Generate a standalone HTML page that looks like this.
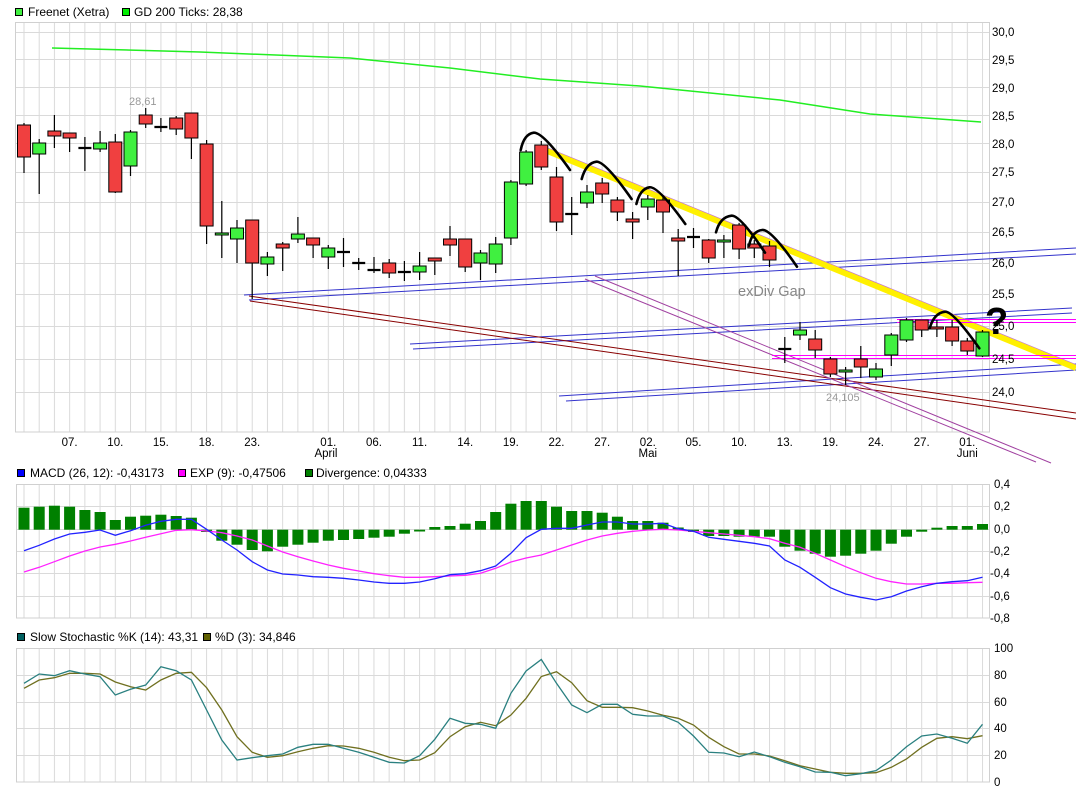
<!DOCTYPE html>
<html><head><meta charset="utf-8"><style>
html,body{margin:0;padding:0;background:#fff;}
svg{display:block;font-family:"Liberation Sans",Arial,sans-serif;}
.ax{font-size:11.5px;fill:#000;}
.lg{font-size:12px;fill:#000;}
</style></head><body>
<svg width="1076" height="810" viewBox="0 0 1076 810" xmlns="http://www.w3.org/2000/svg">
<defs>
<pattern id="vg" x="23.5" y="0" width="15.215" height="810" patternUnits="userSpaceOnUse"><rect x="0" y="0" width="1" height="810" fill="#dadada"/></pattern>
</defs>
<!-- Main panel -->
<rect x="15" y="22" width="975" height="410" fill="#fff"/>
<rect x="15" y="22" width="975" height="410" fill="url(#vg)"/>
<g stroke="#dadada" stroke-width="1">
<path d="M15 32.5H990M15 59.5H990M15 87.5H990M15 115.5H990M15 143.5H990M15 172.5H990M15 202.5H990M15 232.5H990M15 263.5H990M15 294.5H990M15 326.5H990M15 359.5H990M15 392.5H990"/>
</g>
<rect x="15.5" y="22.5" width="974" height="409.5" fill="none" stroke="#d0d0d0"/>

<!-- GD200 -->
<polyline points="52,48 200,52 350,58 450,68 540,79 640,86 780,100 870,114 981,122" fill="none" stroke="#22ee22" stroke-width="1.5"/>

<!-- trendlines -->
<g fill="none" stroke-width="1">
<path d="M244 295L1076 248M249 300L1076 254" stroke="#3333cc"/>
<path d="M410 344L1072 308M413 349L1072 313" stroke="#3333cc"/>
<path d="M559 396L1076 364M566 401L1076 370" stroke="#3333cc"/>
<path d="M249 296L1076 413M250 301L1076 419" stroke="#880000"/>
<path d="M595 276L1051 463M585 279L1036 462" stroke="#a040a0"/>
</g>
<path d="M540 148L1076 368" stroke="#fff000" stroke-width="6"/>
<path d="M540 144.6L1076 364.6" stroke="#c070d0" stroke-width="0.6" fill="none"/>
<path d="M772 355.5H1076M772 358.5H1076M897 319.5H1076M897 322.5H1076" stroke="#ff00ff" stroke-width="1"/>

<!-- wicks -->
<path stroke="#000" stroke-width="1.2" fill="none" d="M24 123V173M39.2 139V194M54.4 115V148M69.6 133V152M84.9 137V171M100.1 131V152M115.3 134V193M130.5 130V176M145.7 108V128M160.9 118V132M176.2 116V135M191.4 113V159M206.6 140V244M221.8 201V258M237 220V263M252.2 220V299M267.4 252V276M282.7 242V271M297.9 217V243M313.1 238V258M328.3 245V269M343.5 238V267M358.7 258V270M374 257V273M389.2 259V278M404.4 261V281M419.6 252V280M434.8 258V275M450 226V256M465.2 239V272M480.5 250V280M495.7 237V273M510.9 180V245M526.1 150V186M541.3 141V170M556.5 167V231M571.7 197V235M587 185V208M602.2 178V203M617.4 197V221M632.6 212V239M647.8 195V220M663 196V233M678.2 229V276M693.5 228V248M708.7 239V263M723.9 235V258M739.1 223V259M754.3 240V258M769.5 241V267M784.8 337V363M800 322V340M815.2 330V358M830.4 357V377M845.6 367V385M860.8 346V378M876 363V380M891.3 333V366M906.5 318V342M921.7 320V337M936.9 320V337M952.1 320V346M967.3 338V355M982.5 330V357"/>
<!-- dojis -->
<path stroke="#000" stroke-width="2.2" d="M78.4 148H91.4M154.4 127H167.4M337 252H350M352.2 263H365.2M367.5 270H380.5M397.9 272H410.9M565.2 214H578.2M687 237H700M778.3 349H791.3"/>
<!-- red bodies -->
<g fill="#f04040" stroke="#000" stroke-width="1">
<rect x="17.5" y="125" width="13" height="32"/>
<rect x="47.9" y="131" width="13" height="5"/>
<rect x="63.1" y="133" width="13" height="5"/>
<rect x="108.8" y="142" width="13" height="50"/>
<rect x="139.2" y="115" width="13" height="9"/>
<rect x="169.7" y="118" width="13" height="11"/>
<rect x="184.9" y="113" width="13" height="25"/>
<rect x="200.1" y="144" width="13" height="82"/>
<rect x="245.7" y="220" width="13" height="43"/>
<rect x="276.2" y="244" width="13" height="4"/>
<rect x="306.6" y="238" width="13" height="7"/>
<rect x="382.7" y="263" width="13" height="10"/>
<rect x="428.3" y="258" width="13" height="3"/>
<rect x="443.5" y="239" width="13" height="6"/>
<rect x="458.7" y="239" width="13" height="28"/>
<rect x="534.8" y="145" width="13" height="22"/>
<rect x="550" y="177" width="13" height="45"/>
<rect x="595.7" y="183" width="13" height="11"/>
<rect x="610.9" y="200" width="13" height="12"/>
<rect x="626.1" y="219" width="13" height="3"/>
<rect x="656.5" y="200" width="13" height="12"/>
<rect x="671.7" y="238" width="13" height="3"/>
<rect x="702.2" y="240" width="13" height="18"/>
<rect x="732.6" y="225" width="13" height="24"/>
<rect x="747.8" y="244" width="13" height="4"/>
<rect x="763" y="246" width="13" height="14"/>
<rect x="808.7" y="339" width="13" height="11"/>
<rect x="823.9" y="359" width="13" height="15"/>
<rect x="854.3" y="359" width="13" height="8"/>
<rect x="915.2" y="320" width="13" height="10"/>
<rect x="930.4" y="327" width="13" height="2"/>
<rect x="945.6" y="327" width="13" height="14"/>
<rect x="960.8" y="341" width="13" height="10"/>
</g>
<!-- green bodies -->
<g fill="#40f040" stroke="#000" stroke-width="1">
<rect x="32.7" y="143" width="13" height="11"/>
<rect x="93.6" y="143" width="13" height="6"/>
<rect x="124" y="132" width="13" height="34"/>
<rect x="215.3" y="233" width="13" height="2"/>
<rect x="230.5" y="228" width="13" height="11"/>
<rect x="260.9" y="257" width="13" height="7"/>
<rect x="291.4" y="234" width="13" height="5"/>
<rect x="321.8" y="248" width="13" height="9"/>
<rect x="413.1" y="266" width="13" height="6"/>
<rect x="474" y="253" width="13" height="10"/>
<rect x="489.2" y="244" width="13" height="20"/>
<rect x="504.4" y="182" width="13" height="56"/>
<rect x="519.6" y="152" width="13" height="32"/>
<rect x="580.5" y="192" width="13" height="11"/>
<rect x="641.3" y="199" width="13" height="8"/>
<rect x="717.4" y="240" width="13" height="2"/>
<rect x="793.5" y="330" width="13" height="5"/>
<rect x="839.1" y="370" width="13" height="2"/>
<rect x="869.5" y="369" width="13" height="8"/>
<rect x="884.8" y="335" width="13" height="20"/>
<rect x="900" y="320" width="13" height="20"/>
<rect x="976" y="332" width="13" height="24"/>
</g>

<!-- hand drawn arcs -->
<g fill="none" stroke="#000" stroke-width="2.6" stroke-linecap="round">
<path d="M520.7 150Q524 134 533.7 132.7Q543 132 570 170"/>
<path d="M581.7 179Q586 163 596.4 161.7Q605 161 631.6 199"/>
<path d="M636.4 204Q640 189 649.4 187.3Q658 186 685.3 224"/>
<path d="M716 232.3Q720 217 731.5 215.7Q740 215 765 252.7"/>
<path d="M749 245.7Q752 231 762.2 230Q771 229 797 266.7"/>
<path d="M929.7 328.3Q934 313 945 311.7Q953 311 979.3 348.3"/>
</g>
<text x="985" y="334" font-weight="bold" font-size="38" fill="#000">?</text>

<text x="738" y="296" font-size="14.5" fill="#888">exDiv Gap</text>
<text x="129" y="105" font-size="11" fill="#999">28,61</text>
<text x="826" y="401" font-size="11" fill="#999">24,105</text>

<!-- main axis labels -->
<g class="ax">
<text x="992" y="36">30,0</text><text x="992" y="64">29,5</text><text x="992" y="92">29,0</text><text x="992" y="120">28,5</text><text x="992" y="148">28,0</text><text x="992" y="176">27,5</text><text x="992" y="206">27,0</text><text x="992" y="236">26,5</text><text x="992" y="267">26,0</text><text x="992" y="298">25,5</text><text x="992" y="330">25,0</text><text x="992" y="363">24,5</text><text x="992" y="396">24,0</text>
</g>
<g class="ax" text-anchor="middle">
<text x="69.6" y="446">07.</text><text x="115.3" y="446">10.</text><text x="160.9" y="446">15.</text><text x="206.6" y="446">18.</text><text x="252.2" y="446">23.</text><text x="328.3" y="446">01.</text><text x="374" y="446">06.</text><text x="419.6" y="446">11.</text><text x="465.2" y="446">14.</text><text x="510.9" y="446">19.</text><text x="556.5" y="446">22.</text><text x="602.2" y="446">27.</text><text x="647.8" y="446">02.</text><text x="693.5" y="446">05.</text><text x="739.1" y="446">10.</text><text x="784.8" y="446">13.</text><text x="830.4" y="446">19.</text><text x="876" y="446">24.</text><text x="921.7" y="446">27.</text><text x="967.3" y="446">01.</text>
<text x="326" y="457">April</text><text x="647.8" y="457">Mai</text><text x="967.3" y="457">Juni</text>
</g>

<!-- legends -->
<g class="lg">
<rect x="15.5" y="8.5" width="7" height="7" fill="#40f040" stroke="#000"/><text x="28" y="16">Freenet (Xetra)</text>
<rect x="122.5" y="8.5" width="7" height="7" fill="#00ee00" stroke="#000"/><text x="134" y="16">GD 200 Ticks: 28,38</text>
<rect x="17.5" y="469.5" width="7" height="7" fill="#0000ff" stroke="#000"/><text x="30" y="477">MACD (26, 12): -0,43173</text>
<rect x="178.5" y="469.5" width="7" height="7" fill="#ff00ff" stroke="#000"/><text x="190" y="477">EXP (9): -0,47506</text>
<rect x="305.5" y="469.5" width="7" height="7" fill="#008000" stroke="#000"/><text x="316" y="477">Divergence: 0,04333</text>
<rect x="17.5" y="633.5" width="7" height="7" fill="#006060" stroke="#000"/><text x="30" y="641">Slow Stochastic %K (14): 43,31</text>
<rect x="203.5" y="633.5" width="7" height="7" fill="#606000" stroke="#000"/><text x="215" y="641">%D (3): 34,846</text>
</g>

<!-- MACD panel -->
<rect x="16" y="484" width="974" height="134" fill="url(#vg)"/>
<path d="M16 506.5H990M16 529.5H990M16 551.5H990M16 573.5H990M16 596.5H990" stroke="#dadada"/>
<rect x="16.5" y="484.5" width="973" height="133.5" fill="none" stroke="#d0d0d0"/>
<g fill="#008000">
<rect x="18.5" y="507.7" width="11" height="22"/><rect x="33.7" y="506.7" width="11" height="23"/><rect x="48.9" y="505.7" width="11" height="24"/><rect x="64.1" y="506.7" width="11" height="23"/><rect x="79.4" y="510" width="11" height="19.7"/><rect x="94.6" y="512" width="11" height="17.7"/><rect x="109.8" y="520" width="11" height="9.7"/><rect x="125" y="516.7" width="11" height="13"/><rect x="140.2" y="515.7" width="11" height="14"/><rect x="155.4" y="514.7" width="11" height="15"/><rect x="170.7" y="516" width="11" height="13.7"/><rect x="185.9" y="517.7" width="11" height="12"/>
<rect x="201.1" y="529.7" width="11" height="2.3"/><rect x="216.3" y="529.7" width="11" height="11"/><rect x="231.5" y="529.7" width="11" height="15"/><rect x="246.7" y="529.7" width="11" height="20.3"/><rect x="261.9" y="529.7" width="11" height="21.6"/><rect x="277.2" y="529.7" width="11" height="17"/><rect x="292.4" y="529.7" width="11" height="15"/><rect x="307.6" y="529.7" width="11" height="13"/><rect x="322.8" y="529.7" width="11" height="11"/><rect x="338" y="529.7" width="11" height="10.3"/><rect x="353.2" y="529.7" width="11" height="9.3"/><rect x="368.5" y="529.7" width="11" height="8"/><rect x="383.7" y="529.7" width="11" height="7"/><rect x="398.9" y="529.7" width="11" height="4"/><rect x="414.1" y="529.7" width="11" height="1.8"/>
<rect x="429.3" y="527" width="11" height="2.7"/><rect x="444.5" y="526" width="11" height="3.7"/><rect x="459.7" y="523.7" width="11" height="6"/><rect x="475" y="521" width="11" height="8.7"/><rect x="490.2" y="512" width="11" height="17.7"/><rect x="505.4" y="503.7" width="11" height="26"/><rect x="520.6" y="501" width="11" height="28.7"/><rect x="535.8" y="501" width="11" height="28.7"/><rect x="551" y="506.7" width="11" height="23"/><rect x="566.2" y="511" width="11" height="18.7"/><rect x="581.5" y="511" width="11" height="18.7"/><rect x="596.7" y="512.7" width="11" height="17"/><rect x="611.9" y="516.7" width="11" height="13"/><rect x="627.1" y="521" width="11" height="8.7"/><rect x="642.3" y="521" width="11" height="8.7"/><rect x="657.5" y="522.7" width="11" height="7"/><rect x="672.7" y="527.5" width="11" height="2.2"/>
<rect x="688" y="529.7" width="11" height="2.3"/><rect x="703.2" y="529.7" width="11" height="6.3"/><rect x="718.4" y="529.7" width="11" height="6.3"/><rect x="733.6" y="529.7" width="11" height="7"/><rect x="748.8" y="529.7" width="11" height="7"/><rect x="764" y="529.7" width="11" height="7"/><rect x="779.3" y="529.7" width="11" height="17"/><rect x="794.5" y="529.7" width="11" height="21"/><rect x="809.7" y="529.7" width="11" height="24"/><rect x="824.9" y="529.7" width="11" height="27"/><rect x="840.1" y="529.7" width="11" height="26"/><rect x="855.3" y="529.7" width="11" height="24"/><rect x="870.5" y="529.7" width="11" height="21"/><rect x="885.8" y="529.7" width="11" height="14"/><rect x="901" y="529.7" width="11" height="7"/><rect x="916.2" y="529.7" width="11" height="2"/>
<rect x="931.4" y="527.7" width="11" height="2"/><rect x="946.6" y="526" width="11" height="3.7"/><rect x="961.8" y="526" width="11" height="3.7"/><rect x="977" y="524" width="11" height="5.7"/>
</g>
<polyline fill="none" stroke="#ff22ff" stroke-width="1.3" points="24,572 39.2,567.3 54.4,561.7 69.6,556 84.9,551 100.1,547 115.3,544.3 130.5,541 145.7,537.3 160.9,533.7 176.2,530.3 191.4,529.7 206.6,531 221.8,532.7 237,536 252.2,540 267.4,546 282.7,552 297.9,556.7 313.1,561 328.3,565 343.5,568.3 358.7,571 374,573.7 389.2,575.7 404.4,577.3 419.6,577.3 434.8,576.7 450,576 465.2,575.3 480.5,573.3 495.7,568.3 510.9,562 526.1,558 541.3,555 556.5,550 571.7,545 587,540 602.2,536 617.4,533.3 632.6,531.3 647.8,530 663,529.3 678.2,530 693.5,531.3 708.7,532.7 723.9,534 739.1,535.3 754.3,536.7 769.5,538.7 784.8,543.3 800,547.3 815.2,553.3 830.4,560 845.6,566.7 860.8,572.7 876,578.3 891.3,581.7 906.5,584 921.7,584 936.9,583.3 952.1,583.3 967.3,582.7 982.5,582.3"/>
<polyline fill="none" stroke="#2222ff" stroke-width="1.3" points="24,550.7 39.2,545.3 54.4,539 69.6,534 84.9,532.3 100.1,530 115.3,535.3 130.5,530.7 145.7,525.3 160.9,521.3 176.2,519.3 191.4,519.3 206.6,529.3 221.8,540 237,550 252.2,561.7 267.4,570 282.7,574 297.9,575 313.1,576.7 328.3,577.3 343.5,578.3 358.7,580 374,582 389.2,583.3 404.4,583.3 419.6,582 434.8,578.7 450,574.7 465.2,573.7 480.5,570.7 495.7,566 510.9,553.3 526.1,537.7 541.3,529.3 556.5,528.3 571.7,528.3 587,525 602.2,522 617.4,522 632.6,524 647.8,524 663,523.3 678.2,528.7 693.5,531.3 708.7,537.3 723.9,539.3 739.1,541.3 754.3,543.3 769.5,546 784.8,560 800,567.3 815.2,577.3 830.4,587.7 845.6,594 860.8,597.3 876,600 891.3,596.7 906.5,591 921.7,586.7 936.9,583.3 952.1,581.7 967.3,580.7 982.5,577.3"/>
<g class="ax">
<text x="994" y="488">0,4</text><text x="994" y="510">0,2</text><text x="994" y="533">0,0</text><text x="990" y="555">-0,2</text><text x="990" y="577">-0,4</text><text x="990" y="600">-0,6</text><text x="990" y="622">-0,8</text>
</g>

<!-- Stochastic panel -->
<rect x="16" y="648" width="974" height="134" fill="url(#vg)"/>
<path d="M16 675.5H990M16 702.5H990M16 728.5H990M16 755.5H990" stroke="#dadada"/>
<rect x="16.5" y="648.5" width="973" height="133.5" fill="none" stroke="#d0d0d0"/>
<polyline fill="none" stroke="#707020" stroke-width="1.3" points="24,688.3 39.2,680 54.4,677.7 69.6,673.3 84.9,673.3 100.1,674 115.3,682 130.5,686.7 145.7,690 160.9,680 176.2,673.3 191.4,672.3 206.6,687.7 221.8,710 237,736.7 252.2,752.3 267.4,757.3 282.7,755.7 297.9,751.7 313.1,748.3 328.3,745.7 343.5,746 358.7,748.3 374,752.3 389.2,757.3 404.4,760.7 419.6,760 434.8,752.7 450,736.7 465.2,726.7 480.5,722.3 495.7,725.7 510.9,715 526.1,698.3 541.3,676.5 556.5,671.7 571.7,682.7 587,700.7 602.2,707.3 617.4,707.3 632.6,707.7 647.8,711 663,715.3 678.2,718.3 693.5,725 708.7,737.3 723.9,746.7 739.1,754 754.3,754 769.5,756 784.8,760.7 800,765.7 815.2,769 830.4,772.3 845.6,773.3 860.8,773.3 876,772.7 891.3,767.3 906.5,759 921.7,747.3 936.9,738.3 952.1,736.7 967.3,738.7 982.5,735.7"/>
<polyline fill="none" stroke="#2a8080" stroke-width="1.3" points="24,683.3 39.2,674 54.4,675.7 69.6,670.7 84.9,674 100.1,676.7 115.3,695 130.5,689.3 145.7,685 160.9,666.7 176.2,670.7 191.4,680 206.6,710 221.8,740 237,760 252.2,757.7 267.4,755.7 282.7,754 297.9,747.3 313.1,744.3 328.3,744.3 343.5,748.3 358.7,752.3 374,757.3 389.2,762.3 404.4,763 419.6,755.7 434.8,739.3 450,718.3 465.2,723.3 480.5,724.3 495.7,728.3 510.9,693.3 526.1,671 541.3,659.5 556.5,683.3 571.7,705 587,712.7 602.2,704.3 617.4,704.3 632.6,714.3 647.8,716 663,716 678.2,722.3 693.5,736 708.7,752.3 723.9,753 739.1,756.7 754.3,752 769.5,756.7 784.8,762.3 800,766.7 815.2,772 830.4,772.3 845.6,775.7 860.8,773.7 876,770.7 891.3,760 906.5,746.7 921.7,736 936.9,734 952.1,738.3 967.3,743.3 982.5,724.3"/>
<g class="ax">
<text x="994" y="652">100</text><text x="994" y="679">80</text><text x="994" y="706">60</text><text x="994" y="732">40</text><text x="994" y="759">20</text><text x="994" y="786">0</text>
</g>
</svg>
</body></html>
